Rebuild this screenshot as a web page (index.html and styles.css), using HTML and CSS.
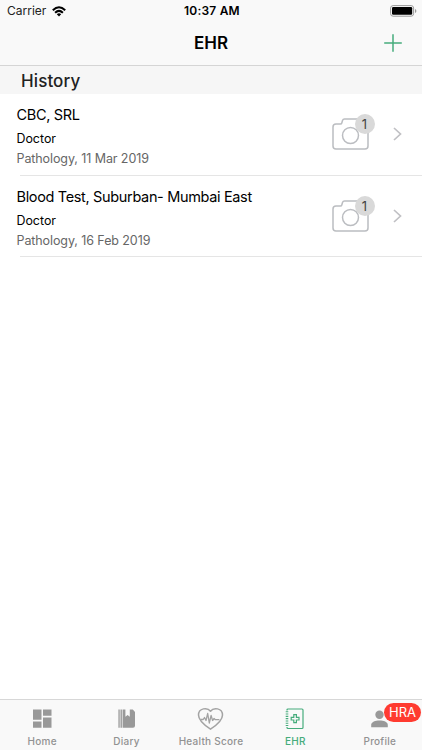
FILE: index.html
```html
<!DOCTYPE html>
<html lang="en">
<head>
<meta charset="utf-8">
<title>EHR</title>
<link rel="stylesheet" href="styles.css">
</head>
<body>
<svg class="defs" width="0" height="0">
  <symbol id="camera" viewBox="0 0 38 34">
    <path d="M4 7H8.500q1 0 1.300-1l.7-2.500Q11 2 12.500 2h13q1.300 0 1.800 1.200L29 7h4.500Q36 7 36 10v19q0 3-3 3h-29q-3 0-3-3V10q0-3 3-3z"/>
    <circle cx="18.500" cy="18.500" r="8"/>
  </symbol>
  <symbol id="chevron" viewBox="0 0 9 14"><path d="M1 1l6.500 6L1 13"/></symbol>
</svg>
<div class="screen">
  <header class="top">
    <div class="status">
      <div class="carrier"><span>Carrier</span>
        <svg width="14" height="11" viewBox="0 0 14 11"><g fill="none" stroke="#000" stroke-width="2"><path d="M.8 4.200Q7-1.800 13.200 4.200"/><path d="M3.100 6.700Q7 3 10.900 6.700"/></g><path d="M4.800 8.300Q7 6.400 9.200 8.300L7 10.600z"/></svg>
      </div>
      <div class="clock">10:37 AM</div>
      <div class="battery"><svg width="27" height="12" viewBox="0 0 27 12"><rect x=".6" y=".6" width="23" height="10.600" rx="2.500" fill="none" stroke="#999"/><rect x="2" y="2" width="20.200" height="7.800" rx="1.200"/><path d="M25 4v4q1.400-.6 1.400-2T25 4z" fill="#999"/></svg></div>
    </div>
    <div class="nav">
      <h1>EHR</h1>
      <svg class="add" width="18" height="18" viewBox="0 0 18 18"><path d="M9 .2v17.600M.2 9h17.600" stroke="#46ac7c" stroke-width="1.500"/></svg>
    </div>
  </header>
  <h2 class="section">History</h2>
  <main>
    <article class="row first">
      <div class="info"><div class="title">CBC, SRL</div><div class="doctor">Doctor</div><div class="meta">Pathology, 11 Mar 2019</div></div>
      <div class="photos"><svg width="38" height="34"><use href="#camera"/></svg><span class="count">1</span></div>
      <svg class="chevron" width="9" height="14"><use href="#chevron"/></svg>
    </article>
    <article class="row">
      <div class="info"><div class="title">Blood Test, Suburban- Mumbai East</div><div class="doctor">Doctor</div><div class="meta">Pathology, 16 Feb 2019</div></div>
      <div class="photos"><svg width="38" height="34"><use href="#camera"/></svg><span class="count">1</span></div>
      <svg class="chevron" width="9" height="14"><use href="#chevron"/></svg>
    </article>
  </main>
  <nav class="tabs">
    <div class="tab"><svg width="28" height="24" viewBox="0 0 28 24"><path fill="#999" d="M5 2.500h8.500v10.300H5zM15 2.500h8.500v6.200H15zM5 14.400h8.500v6.300H5zM15 10.500h8.500v10.200H15z"/></svg><span>Home</span></div>
    <div class="tab"><svg width="28" height="24" viewBox="0 0 28 24"><path fill="#999" d="M5.400 2.500h1.300v18.300H5.400zM7.500 2.500h1.400v18.300H7.500zM9.600 2.500h2.800v7.300l2.200-1.700 2.200 1.700V2.500h3L22 5v13.800q0 2-2 2H9.600z"/></svg><span>Diary</span></div>
    <div class="tab"><svg width="28" height="24" viewBox="0 0 28 24"><g fill="none" stroke="#a3a3a3" stroke-linejoin="round"><path stroke-width="1.500" d="M13.500 22.200Q1.500 14.500 1.500 8.100C1.500 .8 10.500 .1 13.500 4.200 16.500 .1 25.500 .8 25.500 8.100Q25.500 14.500 13.500 22.200z"/><path stroke-width="1.300" d="M3.500 12.500h2.700l1.300-2 1.500 3 1.700-7 1.600 9.500 1.800-7.500 1.500 5 1.500-2 1.300 1.200h4"/></g></svg><span>Health Score</span></div>
    <div class="tab active"><svg width="28" height="24" viewBox="0 0 28 24"><g fill="none" stroke="#46ac7c"><path stroke-width="1.200" d="M6 3.500V3q0-1 1-1h14q1 0 1 1v17.500q0 1-1 1H7q-1 0-1-1V20"/><path stroke-width="2.600" stroke-dasharray="1.100 1.200" d="M6 4.200v15.500"/><path stroke-width="1.200" d="M12.800 7.700h2.600v2.700H18V13h-2.600v2.700h-2.600V13h-2.600v-2.600h2.600z"/></g></svg><span>EHR</span></div>
    <div class="tab"><svg width="28" height="24" viewBox="0 0 28 24"><g fill="#999"><circle cx="13.500" cy="7.700" r="4.200"/><path d="M5.200 20.200v-2.500C5.200 12 21.800 12 21.800 17.700v2.500z"/></g></svg><span>Profile</span><b class="badge">HRA</b></div>
  </nav>
</div>
</body>
</html>
```
FILE: styles.css
```css
* { box-sizing: border-box; }
body { margin: 0; background: #fff; color: #000; font-family: Inter, "Liberation Sans", sans-serif; }
.defs { position: absolute; }
.screen { display: flex; flex-direction: column; width: 422px; height: 750px; overflow: hidden; }
.top { height: 66px; background: #f9f9f9; border-bottom: 1px solid #d5d5d5; }
.status { display: grid; grid-template-columns: 1fr auto 1fr; height: 22px; padding: 0 5px 0 7px; align-items: center; }
.carrier { display: flex; align-items: center; gap: 5.500px; font-size: 12px; line-height: 22px; color: #222; }
.clock { font-size: 12px; font-weight: 600; line-height: 22px; letter-spacing: .2px; }
.battery { display: flex; justify-content: flex-end; }
.nav { display: grid; grid-template-columns: 1fr auto 1fr; height: 43px; align-items: center; padding: 0 20px; }
h1 { grid-column: 2; margin: 0; font-size: 17px; font-weight: 600; line-height: 43px; }
.add { justify-self: end; margin-bottom: 2px; }
.section { margin: 0; height: 28px; padding-left: 21px; background: #f6f6f6; color: #222; font-size: 17px; font-weight: 500; line-height: 30px; letter-spacing: .1px; }
main { flex: 1; }
.row { display: flex; height: 81px; padding: 10px 20px 0 17px; background: linear-gradient(#e5e5e5, #e5e5e5) 20px 100% / 100% 1px no-repeat; }
.first { height: 82px; }
.info { flex: 1; margin-left: -.5px; white-space: nowrap; }
.title { font-size: 14.500px; line-height: 22px; letter-spacing: -.34px; }
.doctor { margin-top: 3px; font-size: 12.400px; line-height: 20px; }
.meta { color: #666; font-size: 12.500px; line-height: 19px; letter-spacing: -.09px; }
.photos { position: relative; width: 38px; height: 34px; margin-top: 13px; fill: none; stroke: #bbbdc1; stroke-width: 1.500px; }
.count { position: absolute; top: -3px; left: 22.500px; width: 20px; height: 20px; border-radius: 50%; background: #d9d9d9; color: #444; font-size: 13px; line-height: 20px; text-align: center; }
.chevron { margin: 23px 0 0 23px; fill: none; stroke: #c0c0c4; stroke-width: 1.700px; }
.tabs { display: grid; grid-template-columns: repeat(5, 1fr); height: 51px; border-top: 1px solid #d7d7d7; background: #f9f9f9; color: #929292; }
.tab { position: relative; display: flex; flex-direction: column; align-items: center; padding-top: 7px; font-size: 10px; font-weight: 500; line-height: 12px; }
.tab span { margin-top: 4px; letter-spacing: .25px; white-space: nowrap; }
.active { color: #46ac7c; }
.badge { position: absolute; top: 3px; right: 1px; width: 37px; height: 19px; border-radius: 10px; background: #ff3b30; color: #fff; font-size: 13px; font-weight: 400; line-height: 19px; text-align: center; }
```
